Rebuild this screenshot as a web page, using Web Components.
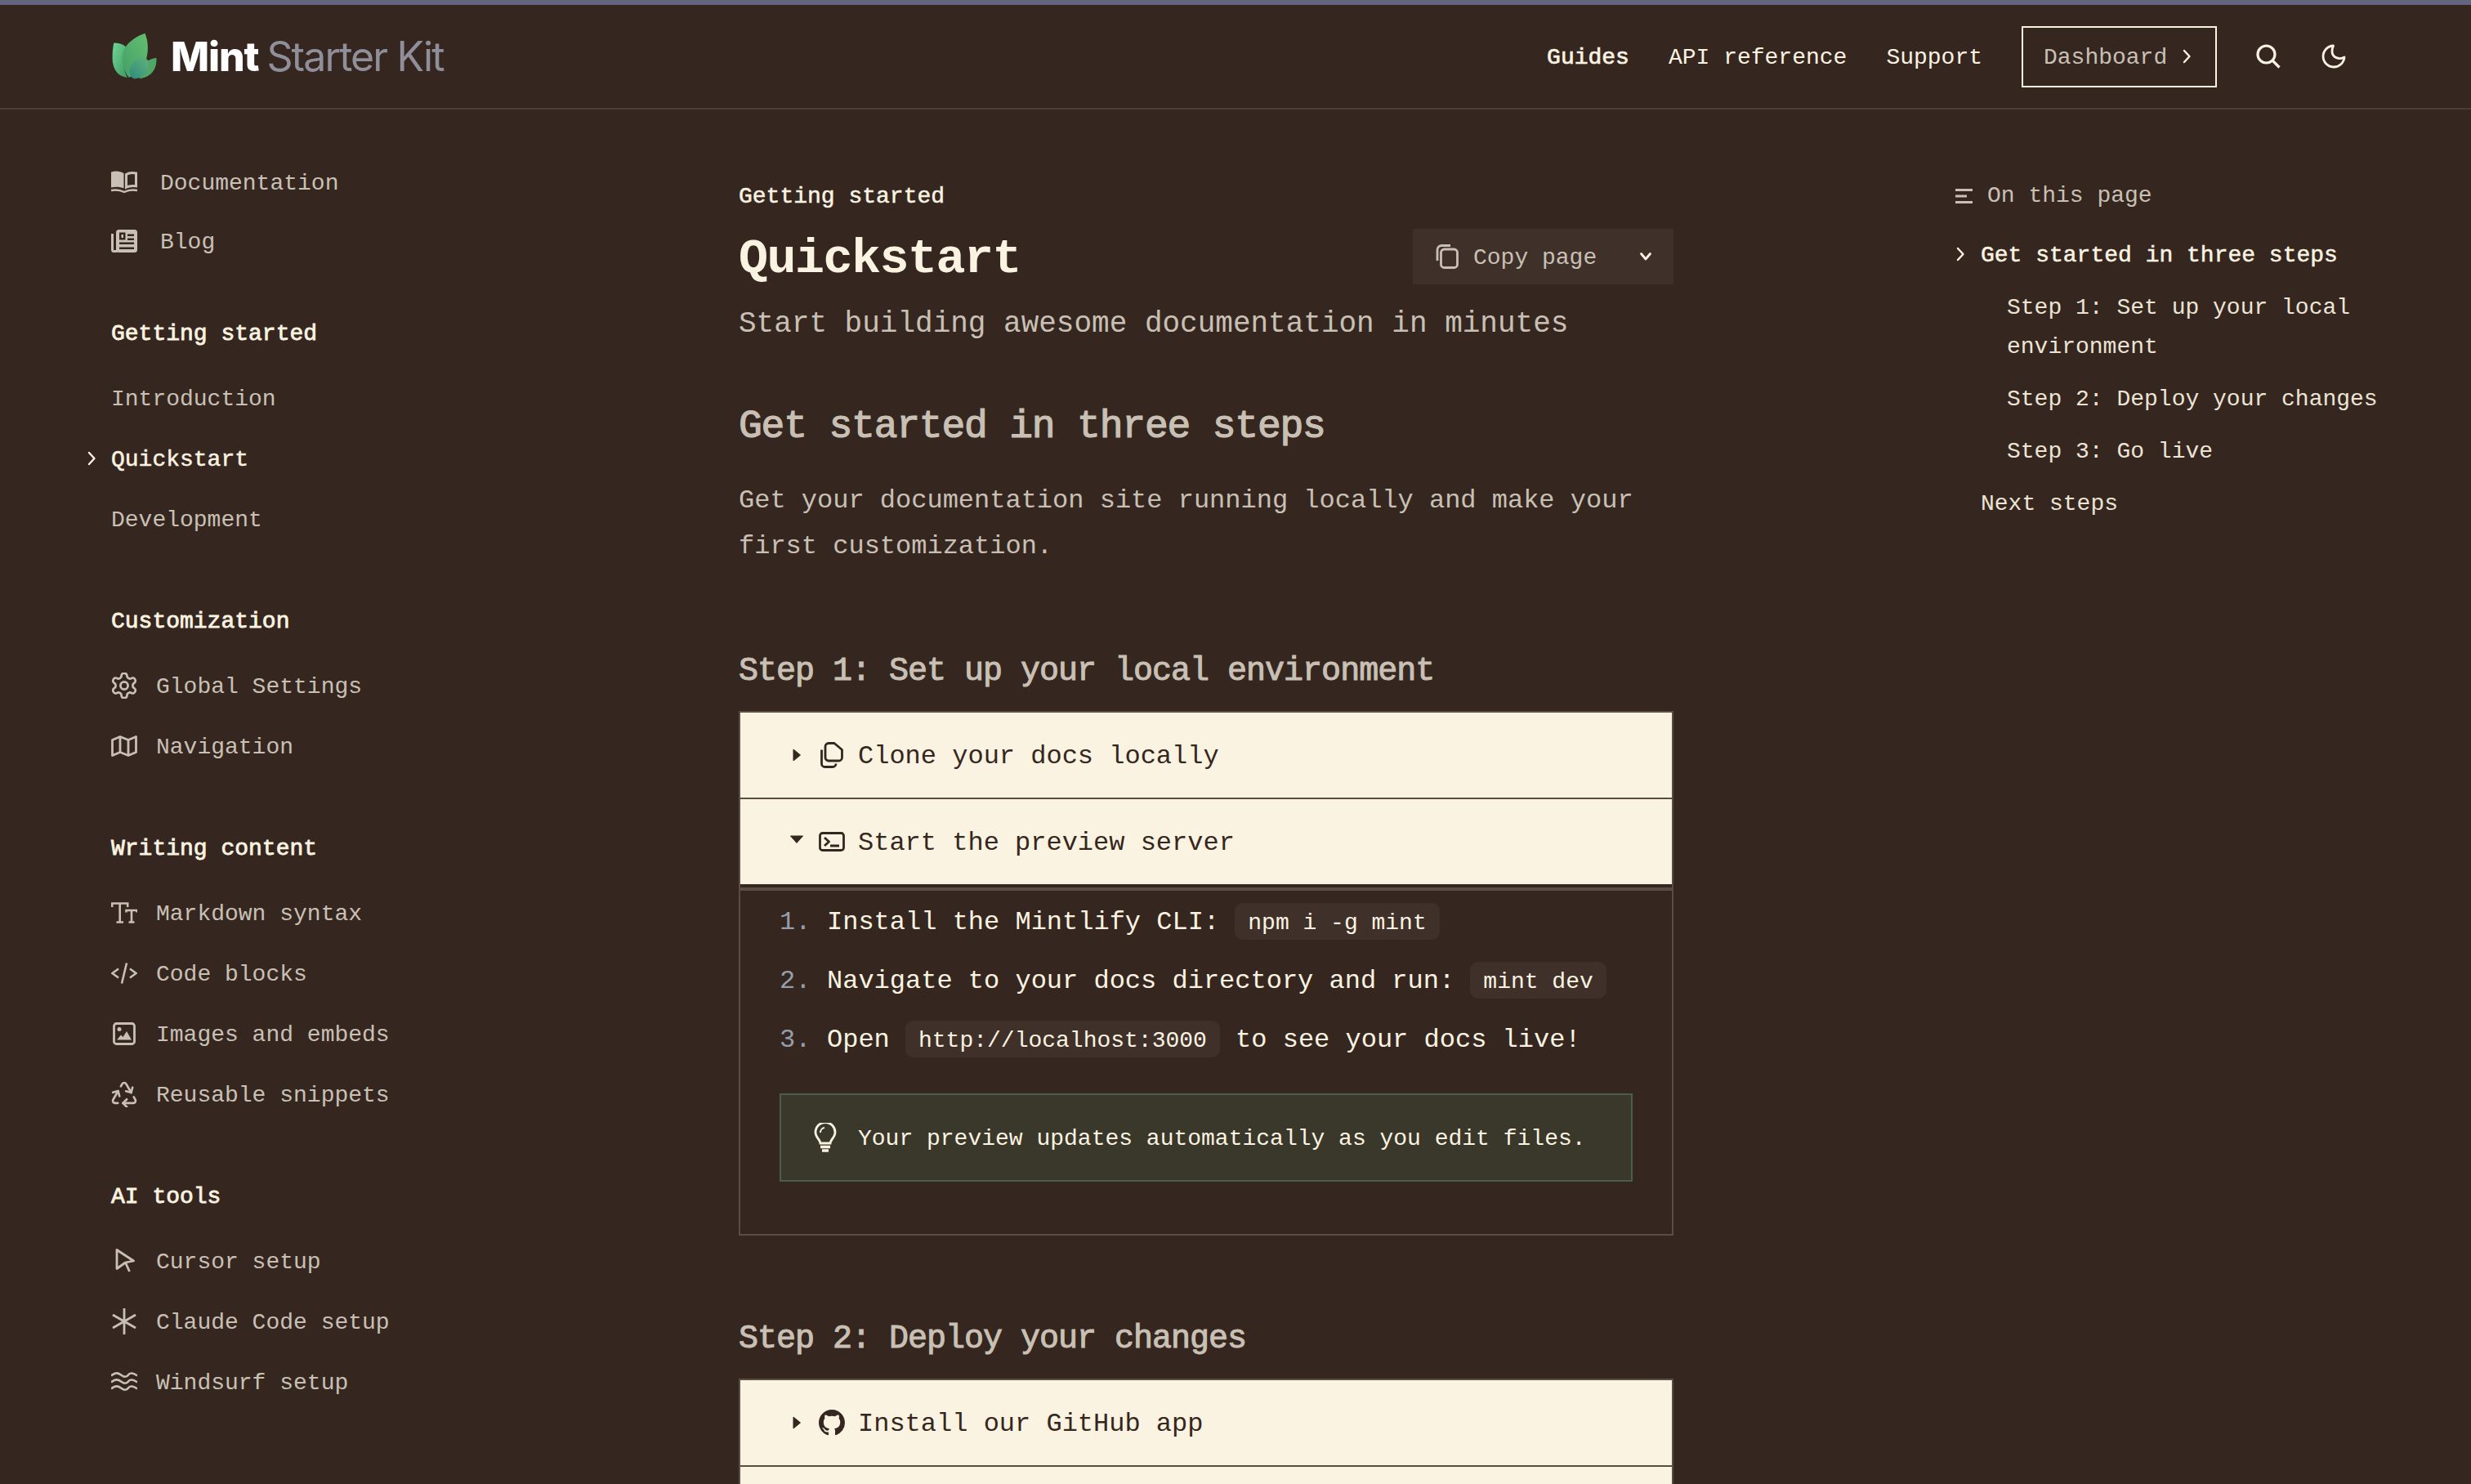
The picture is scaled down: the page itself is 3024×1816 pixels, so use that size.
<!DOCTYPE html>
<html lang="en">
<head>
<meta charset="utf-8">
<title>Quickstart</title>
<style>
  html,body{margin:0;padding:0;background:#352720;}
  body{width:3024px;height:1816px;overflow:hidden;font-family:"Liberation Mono","DejaVu Sans Mono",monospace;font-size:28px;color:#fbf3e1;}
</style>
</head>
<body>
<doc-app></doc-app>
<script>
const ICONS = {
  book:`<svg viewBox="0 0 32 28" width="32" height="28"><path fill="currentColor" d="M0 1.500C5-.3 11 0 15.500 3v18.500C11 19.500 5 19.400 0 20.500z"/><path fill="none" stroke="currentColor" stroke-width="3" d="M18.500 4.500c3-2 7.500-2.200 12-1.500v15.800c-4-.6-8.500-.4-12 1.400z"/><path fill="none" stroke="currentColor" stroke-width="2.400" d="M0 24c6-1 11-.6 16 2 5-2.600 10-3 16-2"/></svg>`,
  news:`<svg viewBox="0 0 32 28" width="32" height="28"><rect x="6" y="0" width="26" height="28" rx="3.500" fill="currentColor"/><path fill="none" stroke="currentColor" stroke-width="3" d="M1.500 5v19.500a2 2 0 0 0 2 2h4"/><g fill="#352720"><rect x="10" y="15.500" width="18" height="2.500"/><rect x="10" y="21.500" width="18" height="2.500"/><rect x="20" y="5.500" width="8" height="2.500"/><rect x="20" y="10.500" width="8" height="2.500"/><path d="M10 3.500h7.500v9H10zm2.500 2.500v4h2.500V6z"/></g></svg>`,
  gear:`<svg viewBox="1.500 1.500 21 21" width="32" height="32" fill="none" stroke="currentColor" stroke-width="1.800" stroke-linejoin="round"><path d="M12.220 2h-.44a2 2 0 0 0-2 2v.18a2 2 0 0 1-1 1.730l-.43.25a2 2 0 0 1-2 0l-.15-.08a2 2 0 0 0-2.730.73l-.22.38a2 2 0 0 0 .73 2.730l.15.1a2 2 0 0 1 1 1.720v.51a2 2 0 0 1-1 1.740l-.15.09a2 2 0 0 0-.73 2.730l.22.38a2 2 0 0 0 2.730.73l.15-.08a2 2 0 0 1 2 0l.43.25a2 2 0 0 1 1 1.730V20a2 2 0 0 0 2 2h.44a2 2 0 0 0 2-2v-.18a2 2 0 0 1 1-1.730l.43-.25a2 2 0 0 1 2 0l.15.08a2 2 0 0 0 2.730-.73l.22-.39a2 2 0 0 0-.73-2.730l-.15-.08a2 2 0 0 1-1-1.740v-.5a2 2 0 0 1 1-1.740l.15-.09a2 2 0 0 0 .73-2.730l-.22-.38a2 2 0 0 0-2.730-.73l-.15.08a2 2 0 0 1-2 0l-.43-.25a2 2 0 0 1-1-1.730V4a2 2 0 0 0-2-2z"/><circle cx="12" cy="12" r="3"/></svg>`,
  map:`<svg viewBox="0 0 32 28" width="32" height="28" fill="none" stroke="currentColor" stroke-width="2.800" stroke-linejoin="round"><path d="M1.500 6.500 11 2.500l10 4 9.500-4v19l-9.500 4-10-4-9.500 4z"/><path d="M11 2.500v19M21 6.500v19"/></svg>`,
  text:`<svg viewBox="0 0 32 26" width="32" height="26" fill="none" stroke="currentColor" stroke-width="2.600"><path d="M1.200 6V1.500h19V6M10.700 1.500V24.500M6.500 24.500h8.500M18.500 12.500V10h13v2.500M25 10v14.500M21.500 24.500h7"/></svg>`,
  code:`<svg viewBox="0 0 32 28" width="32" height="28" fill="none" stroke="currentColor" stroke-width="2.600"><path d="M9 8.500 1.500 14 9 19.500M23 8.500 30.500 14 23 19.500M19 1.500 13 26.500"/></svg>`,
  image:`<svg viewBox="0 0 32 28" width="32" height="28"><rect x="3.500" y="1.500" width="25" height="25" rx="3" fill="none" stroke="currentColor" stroke-width="2.800"/><circle cx="10" cy="8.500" r="2.500" fill="currentColor"/><path fill="currentColor" d="M7 21.500l5-6 2.500 2.500 4.500-7 6 10.500z"/></svg>`,
  recycle:`<svg viewBox="1.700 1.700 20.600 20.600" width="32" height="32" fill="none" stroke="currentColor" stroke-width="1.700" stroke-linecap="round" stroke-linejoin="round"><path d="M7 19H4.815a1.830 1.830 0 0 1-1.570-.881 1.785 1.785 0 0 1-.004-1.784L7.196 9.500"/><path d="M11 19h8.203a1.830 1.830 0 0 0 1.556-.89 1.784 1.784 0 0 0 0-1.775l-1.226-2.120"/><path d="m14 16-3 3 3 3"/><path d="M8.293 13.596 7.196 9.500 3.100 10.598"/><path d="m9.344 5.811 1.093-1.892A1.830 1.830 0 0 1 11.985 3a1.784 1.784 0 0 1 1.546.888l3.943 6.843"/><path d="m13.378 9.633 4.096 1.098 1.097-4.096"/></svg>`,
  cursor:`<svg viewBox="0 0 32 32" width="32" height="32" fill="none" stroke="currentColor" stroke-width="2.800" stroke-linejoin="round"><path d="M7 2.500 27.500 16l-10 2L7 25.500z"/><path d="M17.500 18l5 11"/></svg>`,
  star:`<svg viewBox="0 0 32 32" width="32" height="32" fill="none" stroke="currentColor" stroke-width="2.800"><path d="M16 0v32M2 8l28 16M2 24 30 8"/></svg>`,
  water:`<svg viewBox="0 0 32 24" width="32" height="24" fill="none" stroke="currentColor" stroke-width="2.600"><path d="M0 4.500C5 .5 8 .5 12 3.500s7 3 9 0 6-2.500 11 1M0 12.500c5-4 8-4 12-1s7 3 9 0 6-2.500 11 1M0 20.500c5-4 8-4 12-1s7 3 9 0 6-2.500 11 1"/></svg>`,
  search:`<svg viewBox="0 0 30 30" width="30" height="30" fill="none" stroke="currentColor" stroke-width="3.200"><circle cx="12.500" cy="12.500" r="10.500"/><path d="M20 20l8.500 8.500"/></svg>`,
  moon:`<svg viewBox="0 0 30 30" width="30" height="30" fill="none" stroke="currentColor" stroke-width="2.800" stroke-linecap="round" stroke-linejoin="round"><path d="M14.500 2A13 13 0 1 0 28 16c-6 3.500-15 .5-15-7 0-3 .5-5 1.500-7z"/></svg>`,
  chevR:`<svg viewBox="0 0 12 20" width="12" height="20" fill="none" stroke="currentColor" stroke-width="2.400" stroke-linecap="round" stroke-linejoin="round"><path d="M3 3l6.500 7L3 17"/></svg>`,
  chevD:`<svg viewBox="0 0 16 12" width="16" height="12" fill="none" stroke="currentColor" stroke-width="2.800" stroke-linecap="round" stroke-linejoin="round"><path d="M2.500 2.500 8 9l5.500-6.500"/></svg>`,
  toc:`<svg viewBox="0 0 22 18" width="22" height="18" fill="none" stroke="currentColor" stroke-width="2.800"><path d="M0 1.500h21M0 9h14M0 16.500h21"/></svg>`,
  copyFront:`<svg viewBox="0 0 30 30" width="30" height="30" fill="none" stroke="currentColor" stroke-width="2.800" stroke-linejoin="round"><rect x="7.500" y="6" width="20" height="22.500" rx="4"/><path d="M3 20V7a5.500 5.500 0 0 1 5.500-5.500H19"/></svg>`,
  copyBack:`<svg viewBox="0 0 28 32" width="28" height="32" fill="none" stroke="currentColor" stroke-width="2.800" stroke-linejoin="round"><path d="M10 1.500h7l9.500 8V19a4 4 0 0 1-4 4H10a4 4 0 0 1-4-4V5.500a4 4 0 0 1 4-4z" /><path d="M1.500 9.500V26.500a4 4 0 0 0 4 4H15a4 4 0 0 0 4-4"/></svg>`,
  terminal:`<svg viewBox="0 0 32 24" width="32" height="24" fill="none" stroke="currentColor" stroke-width="2.800" stroke-linejoin="round"><rect x="1.500" y="1.500" width="29" height="21" rx="3"/><path d="M7 7l5.500 5L7 17M14 17h11"/></svg>`,
  github:`<svg viewBox="0 0 16 16" width="32" height="32" fill="currentColor"><path d="M8 0C3.580 0 0 3.580 0 8c0 3.540 2.290 6.530 5.470 7.590.4.07.55-.17.55-.38 0-.19-.01-.82-.01-1.490-2.010.37-2.530-.49-2.690-.94-.09-.23-.48-.94-.82-1.130-.28-.15-.68-.52-.01-.53.63-.01 1.080.58 1.230.82.72 1.210 1.870.87 2.330.66.07-.52.28-.87.51-1.070-1.780-.2-3.640-.89-3.640-3.950 0-.87.31-1.590.82-2.150-.08-.2-.36-1.020.08-2.120 0 0 .67-.21 2.200.82.64-.18 1.320-.27 2-.27s1.360.09 2 .27c1.530-1.040 2.200-.82 2.200-.82.44 1.100.16 1.920.08 2.120.51.56.82 1.270.82 2.150 0 3.070-1.870 3.750-3.650 3.950.29.25.54.73.54 1.480 0 1.070-.01 1.930-.01 2.200 0 .21.15.46.55.38A8.013 8.013 0 0 0 16 8c0-4.420-3.580-8-8-8z"/></svg>`,
  bulb:`<svg viewBox="0 0 28 36" width="28" height="36" fill="none" stroke="currentColor" stroke-width="2.800"><path d="M8 25c0-4-6-7-6-13.500a12 12 0 0 1 24 0C26 18 20 21 20 25z"/><path d="M8 29.500h12M10 34h8" stroke-width="3.500"/><path d="M8 12a6 6 0 0 1 5-6" stroke-width="2"/></svg>`,
  triR:`<svg viewBox="0 0 10 16" width="10" height="16" fill="currentColor" stroke="currentColor" stroke-width="1" stroke-linejoin="round"><path d="M1 1 9.500 8 1 15z"/></svg>`,
  triD:`<svg viewBox="0 0 16 10" width="16" height="10" fill="currentColor" stroke="currentColor" stroke-width="1" stroke-linejoin="round"><path d="M.5 1h15L8 9.500z"/></svg>`
};

function comp(tag, css, html){
  customElements.define(tag, class extends HTMLElement{
    connectedCallback(){
      if(this.shadowRoot) return;
      const r=this.attachShadow({mode:'open'});
      const h = typeof html==='function' ? html(this) : html;
      r.innerHTML=`<style>${css}</style>${h}`;
    }
  });
}

comp('doc-icon',`:host{display:inline-flex;align-items:center;justify-content:center;flex:none;line-height:0}`,
  el=>ICONS[el.getAttribute('name')]||'');

comp('brand-logo',`
  :host{display:flex;align-items:center;gap:15px;font-family:Inter,"Liberation Sans",sans-serif;font-size:50px;line-height:60px}
  svg{display:block}
  b{color:#fff;font-weight:800;letter-spacing:-1.200px}
  span{color:#8f8f9a;font-weight:400;letter-spacing:-1.900px;margin-left:10px}
`,`<svg viewBox="45 60 175 180" width="58" height="60">
  <defs>
    <linearGradient id="a" x1="0" y1="0" x2="1" y2="1"><stop offset="0" stop-color="#6fd696"/><stop offset="1" stop-color="#3f9a62"/></linearGradient>
    <linearGradient id="b" x1="1" y1="0" x2="0" y2="1"><stop offset="0" stop-color="#63bf6f"/><stop offset="1" stop-color="#439f68"/></linearGradient>
    <linearGradient id="c" x1="1" y1="0" x2="0" y2="1"><stop offset="0" stop-color="#62b276"/><stop offset="1" stop-color="#2e8c7f"/></linearGradient>
  </defs>
  <path fill="url(#a)" d="M55 100C75 100 90 105 100 115 85 140 85 190 105 228 70 225 48 195 50 150 50 130 52 115 55 100Z"/>
  <path fill="#4fa765" d="M212 155C215 195 195 225 150 232L160 180C175 165 195 158 212 155Z"/>
  <path fill="url(#b)" d="M170 65C180 90 185 120 175 160 165 190 130 225 110 228 85 195 78 150 95 120 110 95 140 75 170 65Z"/>
  <path fill="url(#c)" d="M165 155C190 160 190 190 175 210 165 225 145 232 130 232 110 228 108 195 125 175 135 163 150 155 165 155Z"/>
</svg><div><b>Mint</b><span>Starter Kit</span></div>`);

comp('dash-button',`
  :host{display:inline-flex;box-sizing:border-box;height:75px;width:239px;align-items:center;padding:0 0 0 25px;gap:18px;border:2px solid #fbf3e1;color:#c9c0b5;line-height:40px}
  span{padding-top:4px}
  doc-icon{color:#fbf3e1}
`,`<span><slot></slot></span><doc-icon name="chevR"></doc-icon>`);

comp('site-header',`
  :host{display:flex;box-sizing:border-box;height:128px;align-items:center;padding:0 153px 0 136px;border-bottom:2px solid #4a3d35}
  .right{margin-left:auto;display:flex;align-items:center;gap:48px;color:#fbf3e1;line-height:40px}
  .tools{display:flex;align-items:center;gap:50px;margin-left:0}
  .tx{padding-top:4px}
  b{font-weight:400;-webkit-text-stroke:.7px #fbf3e1}
`,`<brand-logo></brand-logo><div class="right"><b class="tx">Guides</b><span class="tx">API reference</span><span class="tx">Support</span><dash-button>Dashboard</dash-button><div class="tools"><doc-icon name="search"></doc-icon><doc-icon name="moon"></doc-icon></div></div>`);

comp('nav-item',`
  :host{display:flex;position:relative;align-items:center;height:74px;color:#c9c0b5;line-height:40px}
  :host([compact]){height:72px}
  :host([active]){color:#fbf3e1;-webkit-text-stroke:.5px #fbf3e1}
  .ic{width:32px;height:32px;display:flex;align-items:center;justify-content:center;margin-right:23px}
  :host([wide]) .ic{margin-right:28px}
  .tx{padding-top:4px}
  .chev{position:absolute;left:-30px;top:27px}
`,el=>{
  const i=el.getAttribute('icon');
  return `${el.hasAttribute('active')?'<doc-icon class="chev" name="chevR"></doc-icon>':''}${i?`<span class="ic"><doc-icon name="${i}"></doc-icon></span>`:''}<span class="tx"><slot></slot></span>`;
});

comp('nav-group',`
  :host{display:block;margin-top:67px}
  :host([first]){margin-top:56px}
  h4{margin:0 0 21px;padding-top:2px;font-size:28px;line-height:40px;font-weight:400;color:#fbf3e1;-webkit-text-stroke:.8px #fbf3e1}
`,el=>`<h4>${el.getAttribute('title')}</h4><slot></slot>`);

comp('side-nav',`:host{display:block;padding-top:53px}`,`<slot></slot>`);

comp('copy-button',`
  :host{display:flex;box-sizing:border-box;width:319px;height:68px;align-items:center;background:#3f312a;padding-left:27px;color:#c9c0b5;line-height:40px}
  .t{margin-left:17px;padding-top:4px}
  .c{margin-left:52px;color:#fbf3e1}
`,`<doc-icon name="copyFront"></doc-icon><span class="t"><slot></slot></span><doc-icon class="c" name="chevD"></doc-icon>`);

comp('page-head',`
  :host{display:block}
  .eyebrow{padding-top:2px;line-height:40px;color:#fbf3e1;-webkit-text-stroke:.5px #fbf3e1}
  .row{display:flex;justify-content:space-between;align-items:center;height:68px;margin-top:19px}
  h1{margin:0;padding-top:6px;font-size:60px;line-height:68px;letter-spacing:-1.500px;font-weight:700;color:#fbf3e1}
  p{margin:21px 0 0;font-size:36px;line-height:56px;color:#c9c0b5}
`,el=>`<div class="eyebrow">${el.getAttribute('eyebrow')}</div><div class="row"><h1>${el.getAttribute('heading')}</h1><copy-button>Copy page</copy-button></div><p><slot></slot></p>`);

comp('sec-heading',`
  :host{display:block;margin:96px 0 20px;padding-top:3px;font-size:40px;line-height:56px;letter-spacing:-1px;color:#c9c0b5;-webkit-text-stroke:1px #c9c0b5}
  :host([big]){margin:65px 0 31px;padding-top:0;font-size:48px;line-height:64px;letter-spacing:-1.200px;-webkit-text-stroke:1.200px #c9c0b5}
`,`<slot></slot>`);

comp('body-text',`:host{display:block;margin-bottom:-2px;font-size:32px;line-height:56px;letter-spacing:0;color:#c9c0b5}`,`<slot></slot>`);

comp('acc-row',`
  :host{display:flex;box-sizing:border-box;height:104px;align-items:center;background:#fbf3e1;color:#352720;font-size:32px;line-height:48px;position:relative}
  .tri{display:flex;justify-content:center;padding-left:59px;width:20px;margin-right:-1px}
  :host([open]) .tri{margin-top:-6px}
  .ic{width:32px;display:flex;justify-content:center;margin:0 16px 0 18px}
  .tx{padding-top:4px}
`,el=>`<span class="tri"><doc-icon name="${el.hasAttribute('open')?'triD':'triR'}"></doc-icon></span><span class="ic"><doc-icon name="${el.getAttribute('icon')}"></doc-icon></span><span class="tx"><slot></slot></span>`);

comp('acc-group',`
  :host{display:block;border-top:2px solid #5a4d44;border-left:2px solid #5a4d44;border-right:2px solid #5a4d44}
  ::slotted(acc-row:not(:first-child)){border-top:2px solid #5a4d3f;height:106px}
`,`<slot></slot>`);

comp('acc-panel',`
  :host{display:block;margin:4px -2px 0;border:2px solid #5a4d44;border-top:4px solid #5a4d44;padding:1px 48px 64px}
`,`<slot></slot>`);

comp('step-item',`
  :host{display:flex;height:72px;align-items:center;font-size:32px;line-height:72px;color:#fbf3e1}
  .n{width:58px;flex:none;color:#979eab;padding-top:4px}
  .t{white-space:pre;padding-top:4px}
`,el=>`<span class="n">${el.getAttribute('n')}.</span><span class="t"><slot></slot></span>`);

comp('code-chip',`
  :host{display:inline-block;box-sizing:border-box;height:45px;line-height:41px;padding:4px 16px 0;font-size:28px;background:#3f312a;border-radius:10px;color:#fbf3e1;vertical-align:baseline}
`,`<slot></slot>`);

comp('tip-box',`
  :host{display:flex;box-sizing:border-box;height:108px;margin-top:31px;align-items:center;background:#3a372b;border:2px solid #4a5f4b;padding-left:40px;line-height:40px;color:#fbf3e1}
  .t{margin-left:26px;padding-top:4px}
`,`<doc-icon name="bulb"></doc-icon><span class="t"><slot></slot></span>`);

comp('toc-item',`
  :host{display:block;position:relative;padding-left:31px;line-height:48px;color:#ece4d4}
  :host([sub]){padding-left:63px}
  :host([active]){color:#fbf3e1;-webkit-text-stroke:.5px #fbf3e1}
  .c{position:absolute;left:0;top:12px}
`,el=>`${el.hasAttribute('active')?'<doc-icon class="c" name="chevR"></doc-icon>':''}<slot></slot>`);

comp('toc-panel',`
  :host{display:block;padding-top:82px}
  .h{display:flex;align-items:center;gap:17px;line-height:48px;color:#c9c0b5;margin-bottom:25px}
  .l{display:flex;flex-direction:column;gap:16px}
`,`<div class="h"><doc-icon name="toc"></doc-icon><span>On this page</span></div><div class="l"><slot></slot></div>`);

comp('doc-content',`:host{display:block;padding-top:85px}`,`<slot></slot>`);

comp('doc-layout',`
  :host{display:grid;grid-template-columns:768px 1144px 500px;column-gap:0;padding-left:136px}
  ::slotted(toc-panel){margin-left:345px;width:530px}
`,`<slot></slot>`);

comp('doc-app',`
  :host{display:block;width:3024px;height:1816px;overflow:hidden;background:#352720}
  .strip{height:6px;background:#65667f}
`,`<div class="strip"></div><site-header></site-header>
<doc-layout>
  <side-nav>
    <nav-item compact wide icon="book">Documentation</nav-item>
    <nav-item compact wide icon="news">Blog</nav-item>
    <nav-group first title="Getting started">
      <nav-item>Introduction</nav-item>
      <nav-item active>Quickstart</nav-item>
      <nav-item>Development</nav-item>
    </nav-group>
    <nav-group title="Customization">
      <nav-item icon="gear">Global Settings</nav-item>
      <nav-item icon="map">Navigation</nav-item>
    </nav-group>
    <nav-group title="Writing content">
      <nav-item icon="text">Markdown syntax</nav-item>
      <nav-item icon="code">Code blocks</nav-item>
      <nav-item icon="image">Images and embeds</nav-item>
      <nav-item icon="recycle">Reusable snippets</nav-item>
    </nav-group>
    <nav-group title="AI tools">
      <nav-item icon="cursor">Cursor setup</nav-item>
      <nav-item icon="star">Claude Code setup</nav-item>
      <nav-item icon="water">Windsurf setup</nav-item>
    </nav-group>
  </side-nav>
  <doc-content>
    <page-head eyebrow="Getting started" heading="Quickstart">Start building awesome documentation in minutes</page-head>
    <sec-heading big>Get started in three steps</sec-heading>
    <body-text>Get your documentation site running locally and make your<br>first customization.</body-text>
    <sec-heading>Step 1: Set up your local environment</sec-heading>
    <acc-group>
      <acc-row icon="copyBack">Clone your docs locally</acc-row>
      <acc-row open icon="terminal">Start the preview server</acc-row>
      <acc-panel>
        <step-item n="1">Install the Mintlify CLI: <code-chip>npm i -g mint</code-chip></step-item>
        <step-item n="2">Navigate to your docs directory and run: <code-chip>mint dev</code-chip></step-item>
        <step-item n="3">Open <code-chip>http://localhost:3000</code-chip> to see your docs live!</step-item>
        <tip-box>Your preview updates automatically as you edit files.</tip-box>
      </acc-panel>
    </acc-group>
    <sec-heading>Step 2: Deploy your changes</sec-heading>
    <acc-group>
      <acc-row icon="github">Install our GitHub app</acc-row>
      <acc-row icon="github"></acc-row>
    </acc-group>
  </doc-content>
  <toc-panel>
    <toc-item active>Get started in three steps</toc-item>
    <toc-item sub>Step 1: Set up your local environment</toc-item>
    <toc-item sub>Step 2: Deploy your changes</toc-item>
    <toc-item sub>Step 3: Go live</toc-item>
    <toc-item>Next steps</toc-item>
  </toc-panel>
</doc-layout>`);
</script>
</body>
</html>
